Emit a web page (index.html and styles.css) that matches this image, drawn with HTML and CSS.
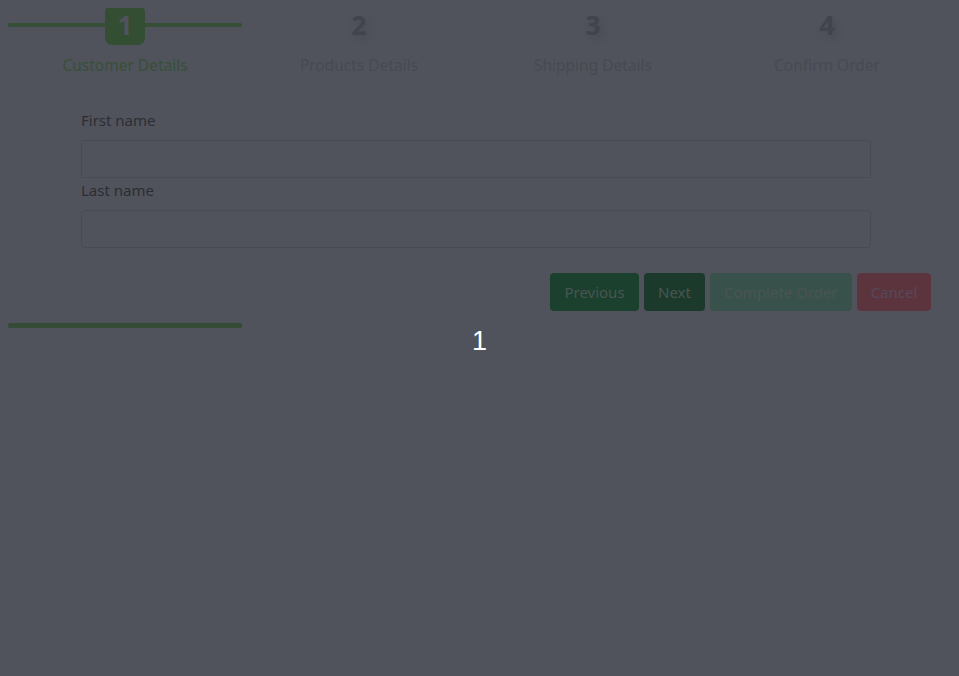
FILE: index.html
```html
<!DOCTYPE html>
<html>
<head>
<meta charset="utf-8">
<link rel="stylesheet" href="styles.css">
</head>
<body>
<div class="wizard">
  <div class="steps">
    <div class="step active">
      <div class="step-top"><span class="bar"></span><span class="badge">1</span></div>
      <div class="step-label">Customer Details</div>
    </div>
    <div class="step">
      <div class="step-top"><span class="num">2</span></div>
      <div class="step-label">Products Details</div>
    </div>
    <div class="step">
      <div class="step-top"><span class="num">3</span></div>
      <div class="step-label">Shipping Details</div>
    </div>
    <div class="step">
      <div class="step-top"><span class="num">4</span></div>
      <div class="step-label">Confirm Order</div>
    </div>
  </div>

  <form class="form">
    <label class="field-label">First name</label>
    <div class="input"></div>
    <label class="field-label">Last name</label>
    <div class="input"></div>
  </form>

  <div class="actions">
    <button class="btn prev">Previous</button>
    <button class="btn next">Next</button>
    <button class="btn complete">Complete Order</button>
    <button class="btn cancel">Cancel</button>
  </div>

  <div class="progress"><span class="progress-bar"></span></div>
  <div class="page-num">1</div>
</div>
</body>
</html>
```
FILE: styles.css
```css
html, body {
  background: #50535c;
}
body {
  margin: 8px;
  font-family: "Noto Sans", "Open Sans", sans-serif;
}
.steps {
  display: grid;
  grid-template-columns: repeat(4, 234px);
}
.step {
  display: flex;
  flex-direction: column;
  align-items: center;
}
.step-top {
  position: relative;
  width: 100%;
  height: 40px;
  margin-top: -3px;
  display: flex;
  justify-content: center;
  align-items: center;
}
.bar {
  position: absolute;
  left: 0;
  right: 0;
  top: 18px;
  height: 4px;
  border-radius: 2px;
  background: #354f37;
}
.badge {
  position: relative;
  width: 40px;
  height: 40px;
  border-radius: 7px;
  background: #344e33;
  color: #50535c;
  font-weight: 700;
  font-size: 27px;
  line-height: 40px;
  text-align: center;
}
.num {
  color: #41444c;
  font-weight: 700;
  font-size: 27px;
  line-height: 40px;
  text-shadow: 3px 4px 6px #494c55;
}
.step-label {
  margin-top: 10px;
  font-size: 15.5px;
  line-height: 20px;
  color: #474a52;
}
.step.active .step-label {
  color: #384f37;
}
.form {
  margin: 35px 0 0 73px;
  width: 790px;
}
.field-label {
  display: block;
  font-size: 15px;
  line-height: 20px;
  color: #2c2e34;
}
.input {
  height: 36px;
  border: 1px dotted #41444c;
  border-radius: 4px;
  margin: 10px 0 2px;
}
.actions {
  display: flex;
  justify-content: flex-end;
  gap: 5px;
  margin: 25px 20px 0 0;
}
.btn {
  height: 38px;
  border: none;
  border-radius: 4px;
  padding: 0 12px;
  font-family: inherit;
  font-size: 15px;
  color: #4a5552;
}
.prev { background: #1b402e; width: 89px; }
.next { background: #1c3a2c; width: 61px; }
.complete { background: #38514b; width: 142px; }
.cancel { background: #5c343e; width: 74px; color: #57495a; }
.progress {
  margin-top: 12px;
  width: 234px;
}
.progress-bar {
  display: block;
  height: 5px;
  border-radius: 2px;
  background: #344b36;
}
.page-num {
  text-align: center;
  color: #ffffff;
  font-family: "Liberation Sans", Arial, sans-serif;
  font-size: 27px;
  line-height: 30px;
  margin-top: -2px;
}
```
